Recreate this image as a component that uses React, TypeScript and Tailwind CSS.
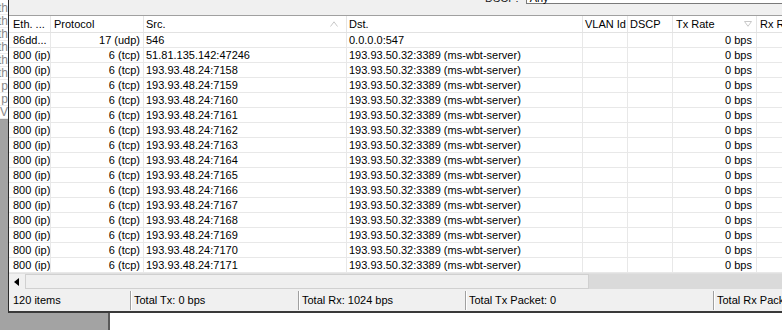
import React from "react";

const cols = "grid grid-cols-[42px_93px_203px_236px_45px_45px_84px_140px]";

type Row = { eth: string; proto: string; src: string; dst: string };

const rows: Row[] = [
  { eth: "86dd...", proto: "17 (udp)", src: "546", dst: "0.0.0.0:547" },
  { eth: "800 (ip)", proto: "6 (tcp)", src: "51.81.135.142:47246", dst: "193.93.50.32:3389 (ms-wbt-server)" },
  ...Array.from({ length: 14 }, (_, i) => ({
    eth: "800 (ip)",
    proto: "6 (tcp)",
    src: `193.93.48.24:${7158 + i}`,
    dst: "193.93.50.32:3389 (ms-wbt-server)",
  })),
];

const leftFrags = ["th", "th", "th", "th", "th", "th", "p", "p", "V"];

function UpArrow() {
  return (
    <svg width="8" height="6" viewBox="0 0 8 6" className="shrink-0">
      <path d="M0.5 5.5 L4 0.8 L7.5 5.5" fill="none" stroke="#c8c8c8" strokeWidth="1" />
    </svg>
  );
}

function DownArrow() {
  return (
    <svg width="8" height="6" viewBox="0 0 8 6" className="shrink-0">
      <path d="M0.5 0.5 L7.5 0.5 L4 5.3 Z" fill="none" stroke="#c8c8c8" strokeWidth="1" />
    </svg>
  );
}

export default function App() {
  return (
    <div className="w-[782px] h-[330px] overflow-hidden bg-[#a3a3a3] font-['Liberation_Sans',Arial,sans-serif] text-[11px] text-black leading-none flex flex-col">
      <div className="flex h-[313px]">
        {/* left strip of window behind */}
        <div className="w-[8px] shrink-0 flex flex-col">
          <div className="h-[120px] bg-white border-b border-[#9a9a9a] flex flex-col pt-[2px] overflow-hidden">
            {leftFrags.map((t, i) => (
              <div key={i} className="h-[13px] flex justify-end items-center text-[12px] text-[#8a8a8a] border-b border-[#ececec] overflow-hidden whitespace-nowrap">
                {t}
              </div>
            ))}
          </div>
          <div className="flex-1 bg-[#a3a3a3]" />
        </div>
        {/* window */}
        <div className="flex-1 min-w-0 flex flex-col border-l border-[#2b2b2b] border-b-2 border-b-[#3a3a3a] bg-[#f0f0f0]">
          {/* toolbar */}
          <div className="h-[16px] shrink-0 bg-[#f0f0f0] flex items-start overflow-hidden border-b border-[#a0a0a0]">
            <span className="ml-[476px] -mt-[7px] shrink-0 text-[#222] whitespace-nowrap">DSCP:</span>
            <div className="ml-[7px] -mt-[14px] shrink-0 h-[18px] w-[300px] border border-[#7a7a7a] bg-white pl-[3px] pt-[6px] whitespace-nowrap">Any</div>
          </div>
          {/* table */}
          <div className="flex-1 min-h-0 overflow-hidden bg-white">
            <div className="w-[900px]">
              <div className={`${cols} h-[17px] bg-white border-b border-[#e2e2e2]`}>
                <div className="border-r border-[#e5e5e5] pl-[4px] flex items-center">Eth. ...</div>
                <div className="border-r border-[#e5e5e5] pl-[3px] flex items-center">Protocol</div>
                <div className="border-r border-[#e5e5e5] pl-[2px] pr-[8px] flex items-center justify-between">
                  <span>Src.</span>
                  <UpArrow />
                </div>
                <div className="border-r border-[#e5e5e5] pl-[2px] flex items-center">Dst.</div>
                <div className="border-r border-[#e5e5e5] pl-[2px] flex items-center">VLAN Id</div>
                <div className="border-r border-[#e5e5e5] pl-[2px] flex items-center">DSCP</div>
                <div className="border-r border-[#e5e5e5] pl-[3px] pr-[4px] flex items-center justify-between">
                  <span>Tx Rate</span>
                  <DownArrow />
                </div>
                <div className="pl-[3px] flex items-center whitespace-nowrap">Rx Rate</div>
              </div>
              {rows.map((r, i) => (
                <div key={i} className={`${cols} h-[15px] border-b border-[#e8e8e8]`}>
                  <div className="border-r border-[#e8e8e8] pl-[4px] pt-[1px] flex items-center whitespace-nowrap overflow-hidden">{r.eth}</div>
                  <div className="border-r border-[#e8e8e8] pr-[3px] pt-[1px] flex items-center justify-end whitespace-nowrap">{r.proto}</div>
                  <div className="border-r border-[#e8e8e8] pl-[2px] pt-[1px] flex items-center whitespace-nowrap">{r.src}</div>
                  <div className="border-r border-[#e8e8e8] pl-[2px] pt-[1px] flex items-center whitespace-nowrap">{r.dst}</div>
                  <div className="border-r border-[#e8e8e8]" />
                  <div className="border-r border-[#e8e8e8]" />
                  <div className="border-r border-[#e8e8e8] pr-[4px] pt-[1px] flex items-center justify-end whitespace-nowrap">0 bps</div>
                  <div />
                </div>
              ))}
            </div>
          </div>
          {/* horizontal scrollbar */}
          <div className="h-[16px] shrink-0 flex bg-[#dadada] border-t border-[#e0e0e0]">
            <div className="w-[16px] shrink-0 bg-[#f0f0f0] flex items-center justify-center">
              <svg width="6" height="8" viewBox="0 0 6 8">
                <path d="M5 0 L5 8 L0 4 Z" fill="#000" />
              </svg>
            </div>
            <div className="w-[564px] shrink-0 bg-[#efefef] border border-[#d0d0d0]" />
            <div className="flex-1" />
          </div>
          {/* status bar */}
          <div className="h-[22px] shrink-0 flex items-center bg-[#f0f0f0] whitespace-nowrap overflow-hidden pt-[1px]">
            <div className="w-[121px] shrink-0 h-full flex items-center pl-[4px]">120 items</div>
            <div className="w-[168px] shrink-0 h-[19px] flex items-center pl-[3px] border-l border-l-[#a0a0a0] shadow-[inset_1px_0_0_#ffffff]">Total Tx: 0 bps</div>
            <div className="w-[167px] shrink-0 h-[19px] flex items-center pl-[3px] border-l border-l-[#a0a0a0] shadow-[inset_1px_0_0_#ffffff]">Total Rx: 1024 bps</div>
            <div className="w-[248px] shrink-0 h-[19px] flex items-center pl-[3px] border-l border-l-[#a0a0a0] shadow-[inset_1px_0_0_#ffffff]">Total Tx Packet: 0</div>
            <div className="w-[200px] shrink-0 h-[19px] flex items-center pl-[3px] border-l border-l-[#a0a0a0] shadow-[inset_1px_0_0_#ffffff]">Total Rx Packet: 0</div>
          </div>
        </div>
      </div>
      {/* below the window */}
      <div className="flex-1 flex">
        <div className="w-[108px] bg-[#a3a3a3]" />
        <div className="w-[2px] bg-[#5a5a5a]" />
        <div className="flex-1 bg-white" />
      </div>
    </div>
  );
}
